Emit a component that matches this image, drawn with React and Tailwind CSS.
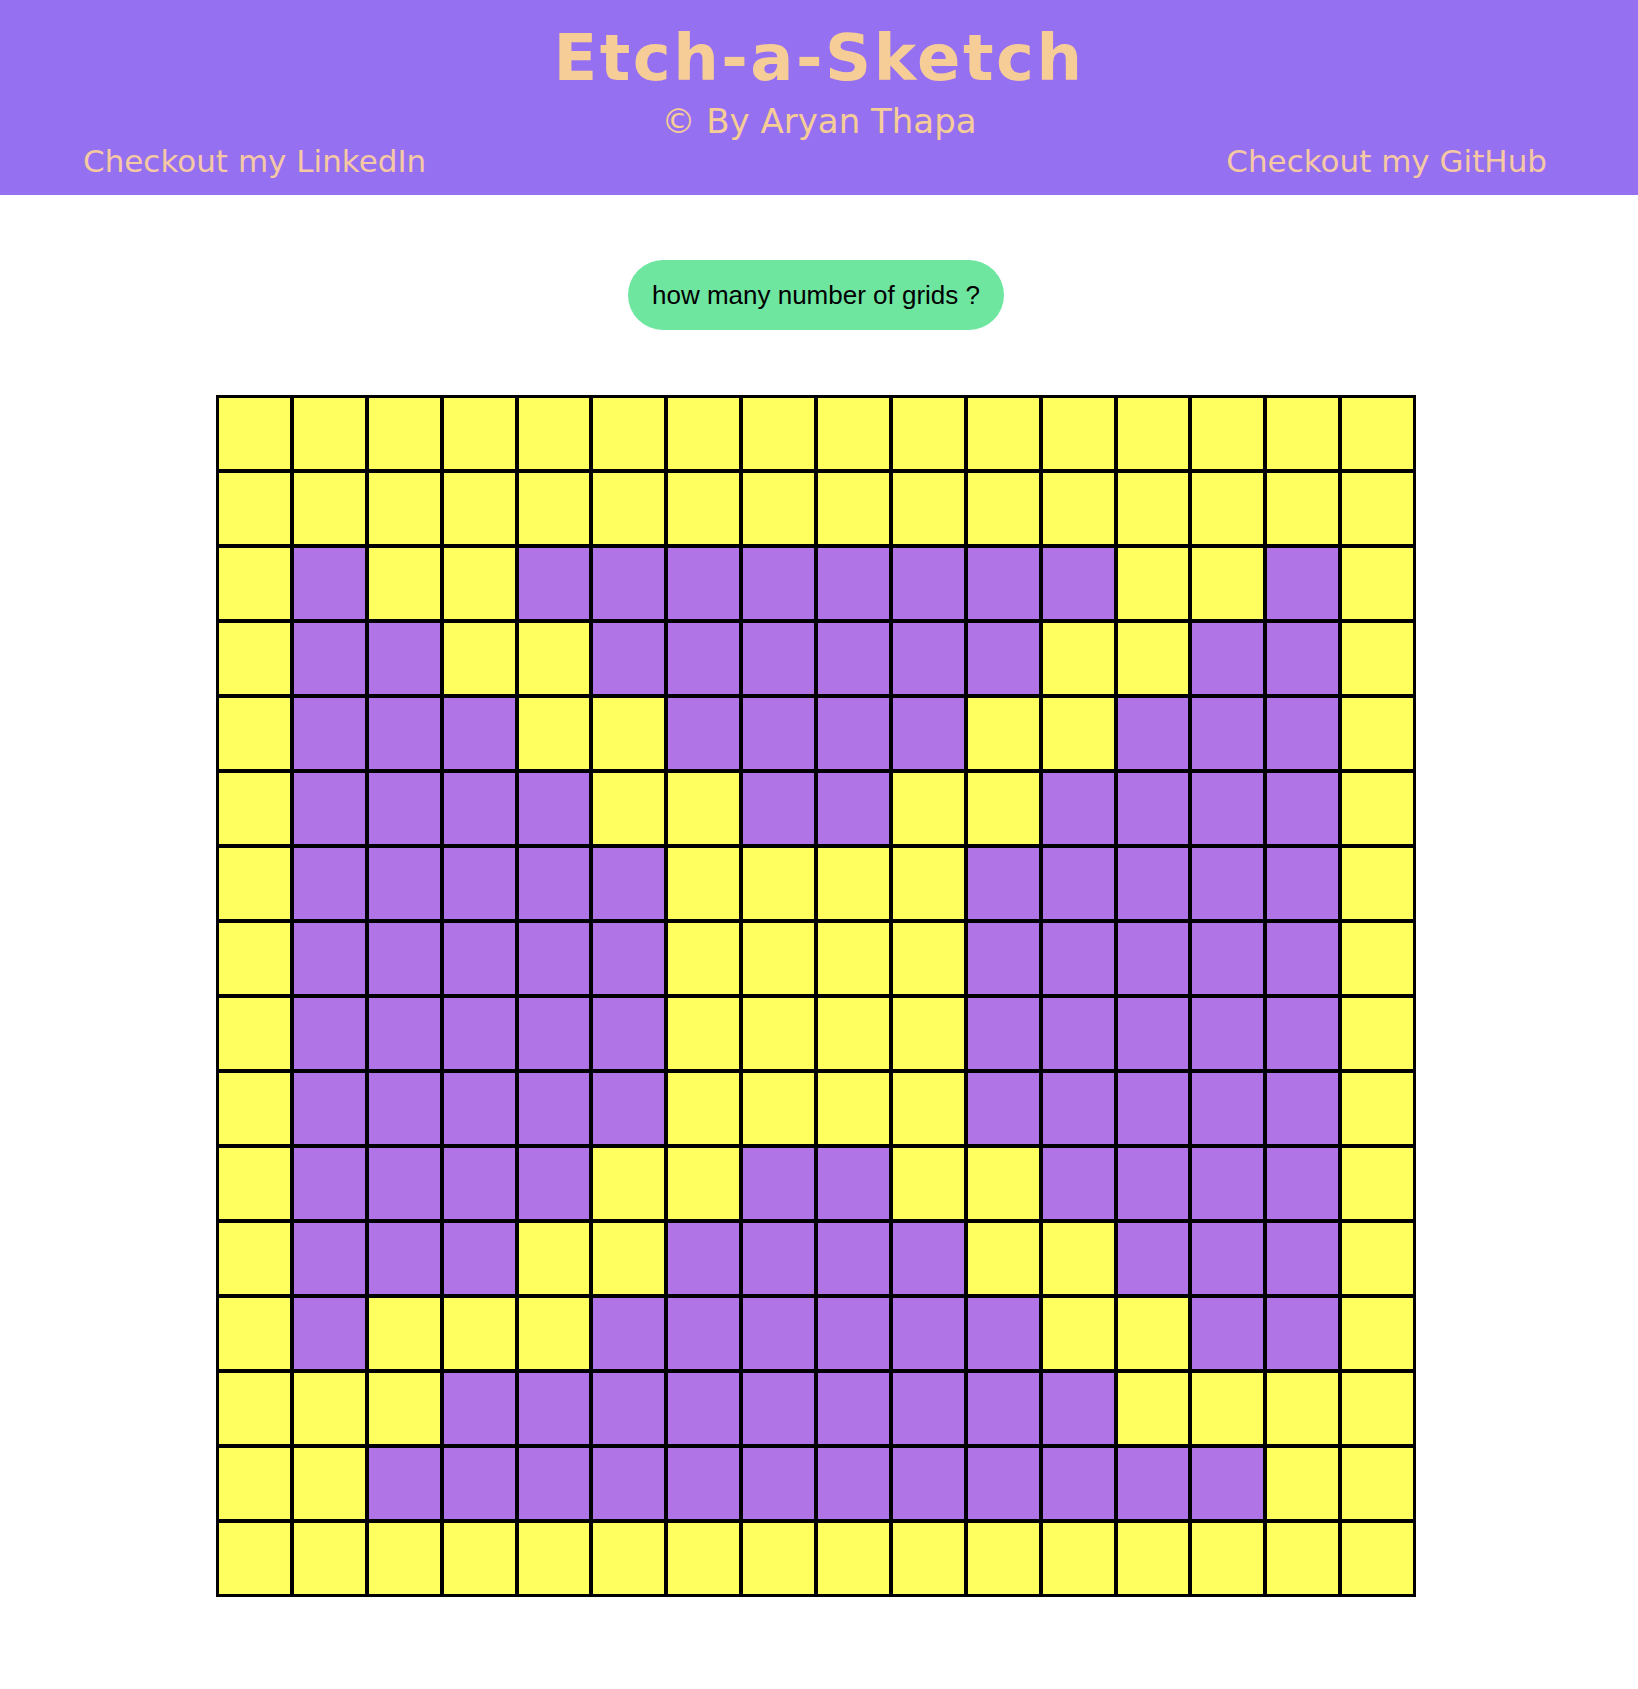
import React from "react";

// Y = yellow cell, P = painted (purple) cell
const pattern = [
  "YYYYYYYYYYYYYYYY",
  "YYYYYYYYYYYYYYYY",
  "YPYYPPPPPPPPYYPY",
  "YPPYYPPPPPPYYPPY",
  "YPPPYYPPPPYYPPPY",
  "YPPPPYYPPYYPPPPY",
  "YPPPPPYYYYPPPPPY",
  "YPPPPPYYYYPPPPPY",
  "YPPPPPYYYYPPPPPY",
  "YPPPPPYYYYPPPPPY",
  "YPPPPYYPPYYPPPPY",
  "YPPPYYPPPPYYPPPY",
  "YPYYYPPPPPPYYPPY",
  "YYYPPPPPPPPPYYYY",
  "YYPPPPPPPPPPPPYY",
  "YYYYYYYYYYYYYYYY",
];

const Header = () => (
  <header className="h-[195px] bg-[#9570f0] flex flex-col items-center text-[#f6cd97] font-['DejaVu_Sans',sans-serif]">
    <h1 className="pt-[26px] text-[64px] leading-none font-bold tracking-[2.5px]">Etch-a-Sketch</h1>
    <div className="mt-[14px] text-[34px] leading-none">© By Aryan Thapa</div>
    <div className="mt-[8px] w-full flex justify-between pl-[83px] pr-[91px] text-[31px] leading-none text-[#f5c9a4]">
      <a href="#">Checkout my LinkedIn</a>
      <a href="#">Checkout my GitHub</a>
    </div>
  </header>
);

const App = () => {
  return (
    <div className="min-h-[1689px] bg-white">
      <Header />
      <div className="flex justify-center pt-[65px]">
        <button className="h-[70px] px-[24px] mr-[6px] rounded-full bg-[#6ee6a0] text-black text-[26px] font-['Liberation_Sans',Arial,sans-serif]">
          how many number of grids ?
        </button>
      </div>
      <div className="mt-[65px] ml-[216px] w-[1200px] border border-black grid grid-cols-[repeat(16,1fr)]">
        {pattern.map((row, r) =>
          row.split("").map((c, i) => (
            <div
              key={`${r}-${i}`}
              className={`h-[75px] border-2 border-black ${c === "P" ? "bg-[#b074e6]" : "bg-[#ffff5f]"}`}
            />
          ))
        )}
      </div>
    </div>
  );
};

export default App;
